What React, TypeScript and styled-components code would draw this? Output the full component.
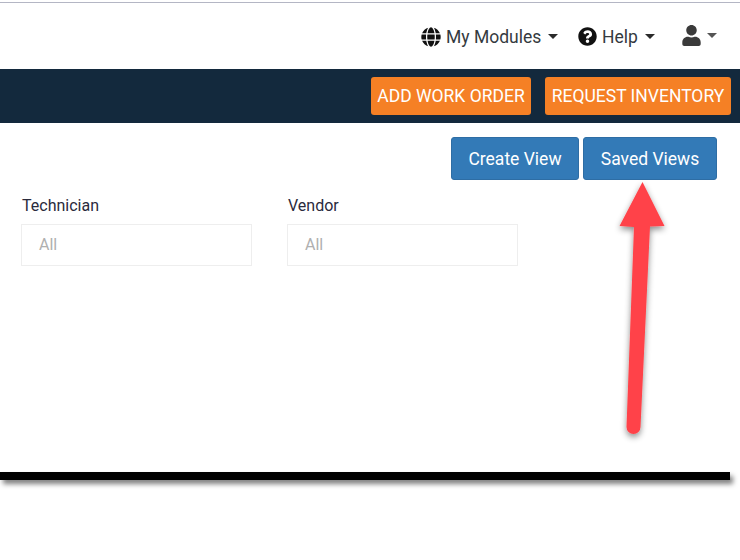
import React from "react";
import styled, { createGlobalStyle } from "styled-components";
import { FaGlobe, FaQuestionCircle, FaUser } from "react-icons/fa";

const GlobalStyle = createGlobalStyle`
  html, body {
    margin: 0;
    padding: 0;
    background: #fff;
  }
  body {
    font-family: Roboto, "Liberation Sans", sans-serif;
    color: #212529;
  }
`;

export default function App() {
  return (
    <>
      <GlobalStyle />
      <Page>
        <TopLine />
        <NavBar>
          <NavItem $width={157}>
            <FaGlobe size={20} color="#111" />
            <span>My Modules</span>
            <Caret />
          </NavItem>
          <NavItem $width={78}>
            <FaQuestionCircle size={19} color="#111" />
            <span>Help</span>
            <Caret />
          </NavItem>
          <UserItem>
            <FaUser size={21} color="#3a3a3a" />
            <Caret $muted />
          </UserItem>
        </NavBar>
        <ActionBar>
          <OrangeButton $width={160}>ADD WORK ORDER</OrangeButton>
          <OrangeButton $width={186}>REQUEST INVENTORY</OrangeButton>
        </ActionBar>
        <Content>
          <ViewButtons>
            <BlueButton $width={128}>Create View</BlueButton>
            <BlueButton $width={134}>Saved Views</BlueButton>
          </ViewButtons>
          <Filters>
            <Filter>
              <FilterLabel>Technician</FilterLabel>
              <FilterBox>All</FilterBox>
            </Filter>
            <Filter>
              <FilterLabel>Vendor</FilterLabel>
              <FilterBox>All</FilterBox>
            </Filter>
          </Filters>
        </Content>
        <BottomRule />
        <Arrow viewBox="0 0 740 560" aria-hidden="true">
          <defs>
            <filter id="arrowShadow" x="-50%" y="-20%" width="200%" height="140%">
              <feDropShadow dx="0" dy="3" stdDeviation="3" floodColor="#000" floodOpacity="0.45" />
            </filter>
          </defs>
          <g filter="url(#arrowShadow)" fill="#ff4248">
            <path d="M642.5 182 L664.5 226 L650 226.5 L640.5 427 A7 7 0 0 1 626.5 427 L634 227 L619.5 226 Z" />
          </g>
        </Arrow>
      </Page>
    </>
  );
}

const Page = styled.div`
  position: relative;
  width: 740px;
  height: 560px;
  overflow: hidden;
  background: #fff;
`;

const TopLine = styled.div`
  height: 1px;
  margin-top: 2px;
  background: #b4b6c4;
`;

const NavBar = styled.div`
  display: flex;
  align-items: center;
  justify-content: flex-end;
  height: 66px;
  padding-right: 18px;
`;

const NavItem = styled.div<{ $width: number }>`
  display: flex;
  align-items: center;
  gap: 5px;
  width: ${({ $width }) => $width}px;
  margin-top: 1px;
  font-size: 17.5px;
  color: #343a40;
  white-space: nowrap;
`;

const UserItem = styled.div`
  display: flex;
  align-items: center;
  gap: 3px;
  width: 41px;
  margin-left: 25px;
  margin-top: -1px;
`;

const Caret = styled.i<{ $muted?: boolean }>`
  display: inline-block;
  width: 0;
  height: 0;
  margin-left: 2px;
  border-top: 5px solid ${({ $muted }) => ($muted ? "#555" : "#2b2b2b")};
  border-left: 5px solid transparent;
  border-right: 5px solid transparent;
`;

const ActionBar = styled.div`
  display: flex;
  align-items: center;
  justify-content: flex-end;
  gap: 14px;
  height: 54px;
  padding-right: 9px;
  box-sizing: border-box;
  background: #13293d;
`;

const OrangeButton = styled.button<{ $width: number }>`
  width: ${({ $width }) => $width}px;
  height: 38px;
  padding: 0;
  border: none;
  border-radius: 3px;
  background: #f58025;
  color: #fff;
  font-family: inherit;
  font-size: 17.5px;
  white-space: nowrap;
`;

const Content = styled.div`
  display: flex;
  flex-direction: column;
  height: 349px;
  box-sizing: border-box;
  padding: 14px 23px 0 21px;
`;

const ViewButtons = styled.div`
  display: flex;
  justify-content: flex-end;
  gap: 4px;
`;

const BlueButton = styled.button<{ $width: number }>`
  width: ${({ $width }) => $width}px;
  height: 43px;
  padding: 0;
  border: 1px solid #2e6da4;
  border-radius: 3px;
  background: #337ab7;
  color: #fff;
  font-family: inherit;
  font-size: 17.5px;
`;

const Filters = styled.div`
  display: flex;
  gap: 35px;
  margin-top: 16px;
`;

const Filter = styled.div`
  width: 231px;
`;

const FilterLabel = styled.div`
  height: 20px;
  margin-bottom: 8px;
  padding-left: 1px;
  font-size: 16px;
  line-height: 20px;
  color: #2a2a3c;
`;

const FilterBox = styled.div`
  box-sizing: border-box;
  height: 42px;
  padding-left: 17px;
  border: 1px solid #eeeeee;
  background: #fff;
  font-size: 16px;
  line-height: 40px;
  color: #b0b0b0;
`;

const BottomRule = styled.div`
  width: 730px;
  height: 8px;
  background: #000;
  box-shadow: 3px 4px 5px rgba(0, 0, 0, 0.5);
`;

const Arrow = styled.svg`
  position: absolute;
  top: 0;
  left: 0;
  width: 740px;
  height: 560px;
  pointer-events: none;
`;
